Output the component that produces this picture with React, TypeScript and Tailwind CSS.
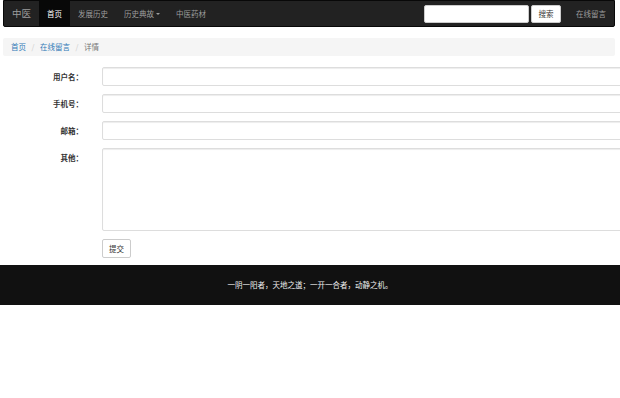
import React from "react";

const font = { fontFamily: '"Noto Sans CJK SC", "Noto Sans", sans-serif' };

function Field({ label, children }: { label: string; children: React.ReactNode }) {
  return (
    <div className="flex items-start gap-[19px]">
      <label className="w-[83px] shrink-0 text-right font-bold text-[7.5px] leading-[19px] text-[#333]">
        {label}
      </label>
      {children}
    </div>
  );
}

export default function App() {
  return (
    <div className="w-full min-h-[398px] overflow-hidden bg-white text-[7.5px] text-[#333]" style={font}>
      <nav className="ml-[3px] mr-[5px] h-[27px] flex items-stretch bg-[#222] border border-[#080808] rounded-b-[2px]">
        <div className="flex items-center px-[8px] text-[9.5px] text-[#9d9d9d]">中医</div>
        <ul className="flex items-stretch">
          <li className="flex items-center px-[8px] bg-[#080808] text-white">首页</li>
          <li className="flex items-center px-[8px] text-[#9d9d9d]">发展历史</li>
          <li className="flex items-center px-[8px] text-[#9d9d9d]">
            历史典故
            <span className="ml-[2px] inline-block w-0 h-0 border-l-[2px] border-r-[2px] border-t-[2px] border-l-transparent border-r-transparent border-t-[#9d9d9d]" />
          </li>
          <li className="flex items-center px-[8px] text-[#9d9d9d]">中医药材</li>
        </ul>
        <div className="ml-auto flex items-center gap-[2px] pr-[7px]">
          <div className="w-[105px] h-[18px] bg-white border border-[#ccc] rounded-[2px]" />
          <button className="w-[30px] h-[18px] bg-white border border-[#ccc] rounded-[2px] text-[7.5px] text-[#333]">搜索</button>
        </div>
        <div className="flex items-center px-[8px] text-[#9d9d9d]">在线留言</div>
      </nav>

      <div className="mt-[11px] ml-[3px] mr-[5px] h-[18px] flex items-center px-[8px] bg-[#f5f5f5] rounded-[2px]">
        <span className="text-[#337ab7]">首页</span>
        <span className="px-[5.5px] text-[#ccc]">/</span>
        <span className="text-[#337ab7]">在线留言</span>
        <span className="px-[5.5px] text-[#ccc]">/</span>
        <span className="text-[#777]">详情</span>
      </div>

      <form className="mt-[11px] flex flex-col gap-[8px]">
        <Field label="用户名：">
          <div className="w-[530px] shrink-0 h-[19px] border border-[#ddd] rounded-[2px] shadow-[inset_0_1px_1px_rgba(0,0,0,0.075)]" />
        </Field>
        <Field label="手机号：">
          <div className="w-[530px] shrink-0 h-[19px] border border-[#ddd] rounded-[2px] shadow-[inset_0_1px_1px_rgba(0,0,0,0.075)]" />
        </Field>
        <Field label="邮箱：">
          <div className="w-[530px] shrink-0 h-[19px] border border-[#ddd] rounded-[2px] shadow-[inset_0_1px_1px_rgba(0,0,0,0.075)]" />
        </Field>
        <Field label="其他：">
          <div className="w-[530px] shrink-0 h-[83px] border border-[#ddd] rounded-[2px] shadow-[inset_0_1px_1px_rgba(0,0,0,0.075)]" />
        </Field>
        <div className="pl-[102px]">
          <button type="button" className="w-[29px] h-[19px] bg-white border border-[#ccc] rounded-[2px] text-[7.5px] text-[#333]">提交</button>
        </div>
      </form>

      <footer className="mt-[7px] h-[40px] flex items-center justify-center bg-[#111] text-[#eee]">
        一阴一阳者，天地之道；一开一合者，动静之机。
      </footer>
    </div>
  );
}
